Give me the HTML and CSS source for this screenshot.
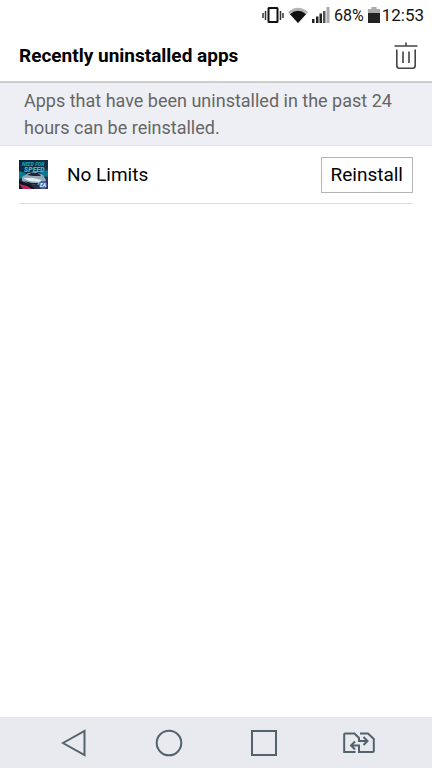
FILE: index.html
```
<!DOCTYPE html>
<html lang="en">
<head>
<meta charset="utf-8">
<meta name="viewport" content="width=device-width, initial-scale=1">
<title>Recently uninstalled apps</title>
<link rel="stylesheet" href="styles.css">
</head>
<body>
<div class="status">
  <svg class="vibrate" width="22" height="16" viewBox="0 0 22 16" aria-hidden="true">
    <path d="M1 6v5M3.500 4v9M18.500 4v9M21 6v5" stroke="#333" stroke-width="1.500" fill="none"/>
    <rect x="6.500" y="1" width="9" height="14" rx="0.500" fill="none" stroke="#111" stroke-width="2"/>
  </svg>
  <svg class="wifi" width="20" height="16" viewBox="0 0 20 16" aria-hidden="true">
    <path d="M0 5Q10-3.500 20 5L10 16Z" fill="#b5b5b5"/>
    <path d="M2 7.200Q10 0.500 18 7.200L10 16Z" fill="#111"/>
  </svg>
  <svg class="signal" width="18" height="16" viewBox="0 0 18 16" aria-hidden="true">
    <path d="M0 12h2.500v4H0zM4 9.500h2.500V16H4zM7.500 6.500H10V16H7.500z" fill="#222"/>
    <path d="M11 4h2.500v12H11z" fill="#555"/>
    <path d="M14.500 0h3v16h-3z" fill="#aaa"/>
  </svg>
  <span class="percent">68%</span>
  <svg class="battery" width="12" height="16" viewBox="0 0 12 16" aria-hidden="true">
    <path d="M3.500 0h5v2H12v5H0V2h3.500z" fill="#aaa"/>
    <path d="M0 6h12v10H0z" fill="#222"/>
  </svg>
  <time class="clock">12:53</time>
</div>
<header class="header">
  <h1>Recently uninstalled apps</h1>
  <button class="trash" type="button" aria-label="Delete">
    <svg width="24" height="28" viewBox="0 0 24 28" fill="none" stroke="#444" stroke-width="1.600" aria-hidden="true">
      <path d="M0.500 4h23M12 0.500V4M2.800 7.500v16q0 2.700 2.700 2.700h13q2.700 0 2.700-2.700v-16M9 9.500V21M15 9.500V21"/>
    </svg>
  </button>
</header>
<main class="main">
  <p class="info">Apps that have been uninstalled in the past 24 hours can be reinstalled.</p>
  <ul class="apps">
    <li class="app">
      <svg class="art" width="29" height="29" viewBox="0 0 29 29" aria-hidden="true">
        <defs>
          <linearGradient id="night" x1="0" y1="0" x2="1" y2="1">
            <stop offset="0" stop-color="#07283c"/>
            <stop offset="0.550" stop-color="#1c2b46"/>
            <stop offset="1" stop-color="#3d3154"/>
          </linearGradient>
        </defs>
        <path d="M0 0h29v29H0z" fill="url(#night)"/>
        <path d="M0 11l7 2-3 5-4 1zM21 12l8-2v7l-6-1z" fill="#087a91"/>
        <path d="M0 21l10 2 6 6H0z" fill="#101522"/>
        <path d="M3 17l6-4 8-1 7 3 3 5-2 4-9 1-8-2-5-2z" fill="#8fa9b8"/>
        <path d="M8 15l4-2h7l3 3h-8z" fill="#17293b"/>
        <path d="M4 18h10l9 2-3 2-10-1z" fill="#e3edf1"/>
        <path d="M5 21l8 2h6l-1 2-8-1z" fill="#152031"/>
        <path d="M0 24l8 2 5 3H4z" fill="#bd2558"/>
        <circle cx="24" cy="25" r="4" fill="#3e65a5"/>
        <text class="logo-top" x="3" y="6">NEED FOR</text>
        <text class="logo-bottom" x="5" y="12">SPEED</text>
        <text class="badge" x="21" y="27">EA</text>
      </svg>
      <span class="name">No Limits</span>
      <button class="reinstall" type="button">Reinstall</button>
    </li>
  </ul>
</main>
<nav class="nav" aria-label="System">
  <button type="button" aria-label="Back"><svg width="26" height="28" viewBox="0 0 26 28"><path d="M2 14L23.500 2v24z"/></svg></button>
  <button type="button" aria-label="Home"><svg width="28" height="28" viewBox="0 0 28 28"><circle cx="14" cy="14" r="12.300"/></svg></button>
  <button type="button" aria-label="Recent apps"><svg width="28" height="28" viewBox="0 0 28 28"><path d="M2 2h24v24H2z"/></svg></button>
  <button type="button" aria-label="Switch SIM"><svg width="32" height="22" viewBox="0 0 32 22"><path d="M12.500 20H1.200V2.500q0-1 1-1h9.300l4.500 4.500v3h8M20.500 5l4 4-4 4M17 1.500h8l5.800 5.500v12q0 1-1 1H16v-6.500H8M12 9.500l-4 4 4 4"/></svg></button>
</nav>
</body>
</html>
```
FILE: styles.css
```
* { box-sizing: border-box; }

body {
  margin: 0;
  min-height: 100vh;
  display: flex;
  flex-direction: column;
  background: #fff;
  color: #111;
  font-family: Roboto, "Liberation Sans", sans-serif;
}

button {
  padding: 0;
  border: 0;
  background: none;
  color: inherit;
  font: inherit;
}

svg { display: block; flex: none; }

.status {
  height: 30px;
  padding: 0 8px;
  display: flex;
  align-items: center;
  justify-content: flex-end;
  gap: 4px;
  font-size: 16px;
}

.clock { font-size: 17px; margin-left: -2px; }

.header {
  height: 53px;
  padding: 0 14px 0 19px;
  display: flex;
  align-items: center;
  justify-content: space-between;
  border-bottom: 2px solid #cdcfcf;
}

h1 {
  margin: 0;
  font-size: 19px;
  line-height: 24px;
  font-weight: 700;
  color: #000;
}

.info {
  margin: 0;
  padding: 4px 24px;
  background: #eeeff5;
  border-bottom: 1px solid #e0e1e3;
  color: #666;
  font-size: 18px;
  line-height: 27px;
}

.main { flex: 1; }

.apps {
  margin: 0;
  padding: 0 19px;
  list-style: none;
}

.app {
  height: 58px;
  display: flex;
  align-items: center;
  border-bottom: 1px solid #ddd;
}

.art text {
  font-weight: 900;
  font-style: italic;
}

.art .logo-top { font-size: 5px; fill: #12a7ad; }
.art .logo-bottom { font-size: 7px; fill: #19cbd0; }
.art .badge { font-size: 5px; fill: #e5eef6; }

.name {
  flex: 1;
  margin-left: 19px;
  font-size: 19px;
  color: #000;
}

.reinstall {
  height: 36px;
  padding: 0 9px;
  border: 1px solid #b4b4b4;
  background: #fff;
  color: #000;
  font-size: 19px;
}

.nav {
  height: 51px;
  padding: 0 26px;
  display: grid;
  grid-template-columns: repeat(4, 1fr);
  background: #e9eaf0;
}

.nav button {
  display: flex;
  align-items: center;
  justify-content: center;
}

.nav svg {
  fill: none;
  stroke: #53626b;
  stroke-width: 2;
}
```
